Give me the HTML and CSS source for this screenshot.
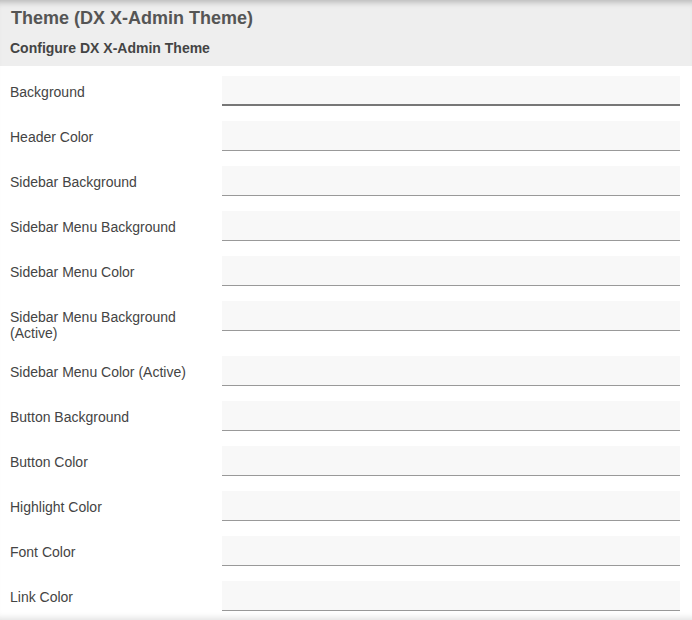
FILE: index.html
```html
<!DOCTYPE html>
<html lang="en">
<head>
    <meta charset="UTF-8">
    <meta name="viewport" content="width=device-width, initial-scale=1.0">
    <title>Theme (DX X-Admin Theme)</title>
    <link rel="stylesheet" href="styles.css">
</head>
<body>
    <div class="panel">
        <!-- Header -->
        <div class="panel-head">
            <h2>Theme (DX X-Admin Theme)</h2>
            <h4>Configure DX X-Admin Theme</h4>
        </div>

        <!-- Theme fields -->
        <form class="theme-form">
            <div class="field">
                <label for="f-bg">Background</label>
                <input type="text" id="f-bg" class="focused" autofocus>
            </div>
            <div class="field">
                <label for="f-header">Header Color</label>
                <input type="text" id="f-header">
            </div>
            <div class="field">
                <label for="f-sidebar">Sidebar Background</label>
                <input type="text" id="f-sidebar">
            </div>
            <div class="field">
                <label for="f-menu-bg">Sidebar Menu Background</label>
                <input type="text" id="f-menu-bg">
            </div>
            <div class="field">
                <label for="f-menu-color">Sidebar Menu Color</label>
                <input type="text" id="f-menu-color">
            </div>
            <div class="field">
                <label for="f-menu-bg-active">Sidebar Menu Background (Active)</label>
                <input type="text" id="f-menu-bg-active">
            </div>
            <div class="field">
                <label for="f-menu-color-active">Sidebar Menu Color (Active)</label>
                <input type="text" id="f-menu-color-active">
            </div>
            <div class="field">
                <label for="f-btn-bg">Button Background</label>
                <input type="text" id="f-btn-bg">
            </div>
            <div class="field">
                <label for="f-btn-color">Button Color</label>
                <input type="text" id="f-btn-color">
            </div>
            <div class="field">
                <label for="f-highlight">Highlight Color</label>
                <input type="text" id="f-highlight">
            </div>
            <div class="field">
                <label for="f-font">Font Color</label>
                <input type="text" id="f-font">
            </div>
            <div class="field">
                <label for="f-link">Link Color</label>
                <input type="text" id="f-link">
            </div>
        </form>
    </div>
</body>
</html>
```

FILE: styles.css
```css
html, body {
    margin: 0;
    height: 100%;
    overflow: hidden;
}
body {
    font-family: "Liberation Sans", Arial, sans-serif;
    color: #444;
    background-color: #fff;
}
.panel {
    height: 100%;
    overflow: hidden;
    box-shadow: inset 0 -7px 6px -5px rgba(0, 0, 0, 0.12);
}
.panel-head {
    background-color: #eee;
    padding: 7px 10px 0 11px;
    height: 59px;
    box-shadow: inset 0 7px 6px -5px rgba(0, 0, 0, 0.25);
}
.panel-head h2 {
    margin: 0;
    font-size: 18px;
    line-height: 22px;
    color: #555;
}
.panel-head h4 {
    margin: 11px 0 0 -1px;
    font-size: 14px;
    line-height: 17px;
    color: #444;
}
.theme-form {
    padding: 10px 12px 0 10px;
}
.field {
    display: flex;
    align-items: flex-start;
    margin-bottom: 15px;
}
.field label {
    width: 200px;
    flex: none;
    margin-right: 12px;
    padding-top: 8px;
    font-size: 14px;
    line-height: 16px;
    color: #444;
}
.field input {
    flex: 1;
    min-width: 0;
    height: 30px;
    box-sizing: border-box;
    margin: 0;
    padding: 0 2px;
    border: 0;
    border-bottom: 1px solid #999;
    background-color: #f8f8f8;
    font-family: inherit;
    font-size: 14px;
    color: #333;
    caret-color: #222;
    outline: none;
}
.field input.focused,
.field input:focus {
    border-bottom: 2px solid #777;
}
```
